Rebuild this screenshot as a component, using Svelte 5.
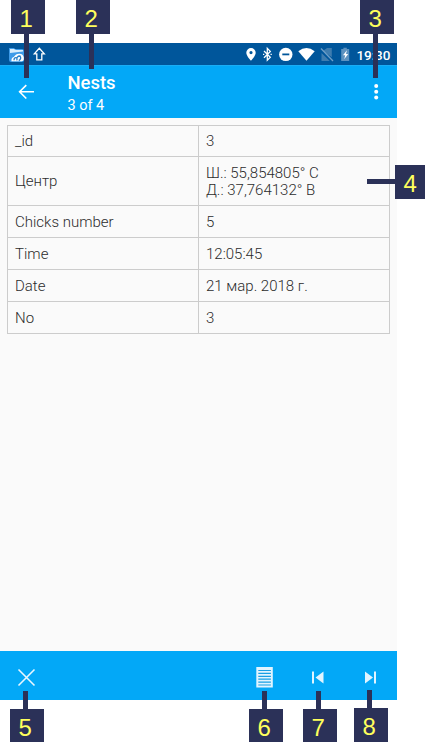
<script>
  const rows = [
    { label: '_id', value: ['3'], height: 31 },
    { label: 'Центр', value: ['Ш.: 55,854805° С', 'Д.: 37,764132° В'], height: 49 },
    { label: 'Chicks number', value: ['5'], height: 32 },
    { label: 'Time', value: ['12:05:45'], height: 32 },
    { label: 'Date', value: ['21 мар. 2018 г.'], height: 32 },
    { label: 'No', value: ['3'], height: 32 }
  ];
  // Callouts pinned over the screen: badge corner, then pointer rectangle.
  const callouts = [
    { n: 1, x: 11, y: 0, px: 24, py: 34, w: 5, h: 44 },
    { n: 2, x: 76, y: 0, px: 89, py: 34, w: 5, h: 35 },
    { n: 3, x: 360, y: 0, px: 373, py: 34, w: 5, h: 44 },
    { n: 4, x: 395, y: 165, px: 367, py: 179, w: 28, h: 5 },
    { n: 5, x: 10, y: 709, px: 23, py: 691, w: 5, h: 18 },
    { n: 6, x: 249, y: 709, px: 262, py: 691, w: 5, h: 18 },
    { n: 7, x: 303, y: 709, px: 316, py: 691, w: 5, h: 18 },
    { n: 8, x: 354, y: 708, px: 367, py: 690, w: 5, h: 18 }
  ];
</script>

<div class="page">
  <div class="screen">
    <div class="status">
      <svg class="left" width="60" height="22" viewBox="0 43 60 22">
        <path d="M9 48h5l1 1h7q2 0 2 2v9q0 2-2 2H11q-2 0-2-2z" fill="#3e9be8" />
        <path d="M10 49h4l2 1h7v1.5L10 53z" fill="#d8edfc" />
        <path d="M11.5 61.3q-.5-3.3 2.3-4.2 2-3.6 5.7-3.4 3.7.3 4.3 3.8v2q-.3 1.8-2 1.8z" fill="#fff" />
        <path d="M14 60.3q0-3.3 2.8-2.5M17 60.3q-.8-4.3 3-4.3 1.8 2.7-1.2 4.6" fill="none" stroke="#277fc8" stroke-width="1.3" />
        <path d="M39.3 48.2l5 5.6h-2.5v6h-5v-6h-2.5z" fill="none" stroke="#fff" stroke-width="1.3" />
      </svg>
      <div class="right">
        <svg width="112" height="22" viewBox="243 43 112 22">
          <path fill-rule="evenodd" d="M251 48a4.7 4.7 0 0 0-4.7 4.7c0 3.2 4.7 8 4.7 8s4.7-4.8 4.7-8A4.7 4.7 0 0 0 251 48zm0 3a1.6 1.6 0 1 1 0 3.2 1.6 1.6 0 0 1 0-3.2z" fill="#fff" />
          <path d="M264 51l6.3 6.3-3 3V48.4l3 3-6.3 6.3M263 54.4h1.3M270.5 54.4h1.3" fill="none" stroke="#fff" stroke-width="1.3" />
          <circle cx="285.8" cy="54.4" r="6.7" fill="#fff" /><path d="M282.3 54.4h7" stroke="#00569b" stroke-width="1.8" />
          <path d="M298.3 51.2q8.2-6.2 16.4 0l-8.2 9.6z" fill="#fff" />
          <path d="M323 51l4-3h4.8v9.2zM321.5 53l8.3 8h-8.3z" fill="#3e7caf" />
          <path d="M321 48.5l12 12.5" stroke="#6f9fc8" stroke-width="1.3" />
          <path d="M341.2 49h2.2v-1.2h3.4V49h2.4v12h-8z" fill="#5c92c0" />
          <path d="M346.7 50.5l-3.7 4.8h2.2l-1 4 4-5.2H346l.9-3.6z" fill="#fff" />
        </svg>
        <span class="clock">19:30</span>
      </div>
    </div>

    <header>
      <svg class="back" width="16" height="16" viewBox="0 0 16 16"><path d="M16 7.8H1.7M8.3 1.1L1.6 7.8l6.7 6.7" fill="none" stroke="#fff" stroke-width="1.6" /></svg>
      <div class="titles">
        <div class="title">Nests</div>
        <div class="sub">3 of 4</div>
      </div>
      <svg class="more" width="6" height="18" viewBox="0 0 6 18"><g fill="#fff"><circle cx="3.2" cy="3.1" r="2" /><circle cx="3.2" cy="8.8" r="2" /><circle cx="3.2" cy="14.4" r="2" /></g></svg>
    </header>

    <main>
      <div class="table">
        {#each rows as row}
          <div class="row" style="height: {row.height}px">
            <div class="cell">{row.label}</div>
            <div class="cell value">{#each row.value as line}<span>{line}</span>{/each}</div>
          </div>
        {/each}
      </div>
    </main>

    <footer>
      <svg width="397" height="49" viewBox="0 651 397 49">
        <path d="M18.5 669.5l16 16M34.5 669.5l-16 16" stroke="#e9f7ff" stroke-width="1.6" />
        <path d="M256.3 667h16.5v20.5h-16.5z" fill="#e1f4ff" />
        <path d="M258.3 670.5h12.6M258.3 673.4h12.6M258.3 676.3h12.6M258.3 679.2h12.6M258.3 682.1h12.6M258.3 685h12.6" stroke="#199fe4" stroke-width="1.2" />
        <path d="M312 671.5h2v12h-2zM323.5 671.5v12l-8-6zM374 671.5h2v12h-2zM365 671.5v12l8-6z" fill="#e1f4ff" />
      </svg>
    </footer>
  </div>

  {#each callouts as c}
    <div class="pointer" style="left:{c.px}px;top:{c.py}px;width:{c.w}px;height:{c.h}px"></div>
    <div class="badge" style="left:{c.x}px;top:{c.y}px">{c.n}</div>
  {/each}
</div>

<style>
  .page {
    position: relative;
    box-sizing: border-box;
    width: 425px;
    height: 742px;
    padding-top: 43px;
    overflow: hidden;
    background: #fff;
    font-family: Roboto, 'Noto Sans', sans-serif;
  }
  .screen { display: flex; flex-direction: column; width: 397px; height: 657px; }
  .status { display: flex; justify-content: space-between; height: 22px; background: #00569b; }
  .right { display: flex; padding-right: 7px; }
  .clock { width: 35px; color: #fff; font-size: 13.5px; font-weight: 500; line-height: 24px; letter-spacing: -0.1px; text-indent: 1.5px; white-space: nowrap; }
  header {
    display: flex;
    box-sizing: border-box;
    height: 53px;
    padding: 0 18px;
    background: #03a8f7;
    border-top: 1px solid #1aaef5;
    color: #fff;
  }
  .back { margin-top: 18px; }
  .titles { flex: 1; padding: 5px 0 0 33.4px; }
  .title { font-size: 18.5px; font-weight: 500; line-height: 24px; }
  .sub { font-size: 14.5px; line-height: 22px; }
  .more { margin-top: 17px; }
  main { flex: 1; padding: 7px 7px 0; background: #fafafa; }
  .table { border: solid #ccc; border-width: 1px 0 0 1px; }
  .row { display: flex; box-sizing: border-box; border-bottom: 1px solid #ccc; }
  .cell {
    display: flex;
    flex-direction: column;
    justify-content: center;
    box-sizing: border-box;
    width: 191px;
    padding: 1px 0 0 7px;
    border-right: 1px solid #ccc;
    color: #2c2c2c;
    font-size: 15px;
    font-weight: 300;
    line-height: 17px;
    white-space: nowrap;
  }
  footer { height: 49px; background: #03a8f7; }
  footer svg { display: block; }
  .badge, .pointer { position: absolute; background: #2b3158; }
  .badge {
    width: 34px;
    height: 34px;
    color: #ffff5c;
    font: 24px/38px 'Liberation Sans', Arial, sans-serif;
    text-align: center;
    text-indent: -3.5px;
  }
</style>
